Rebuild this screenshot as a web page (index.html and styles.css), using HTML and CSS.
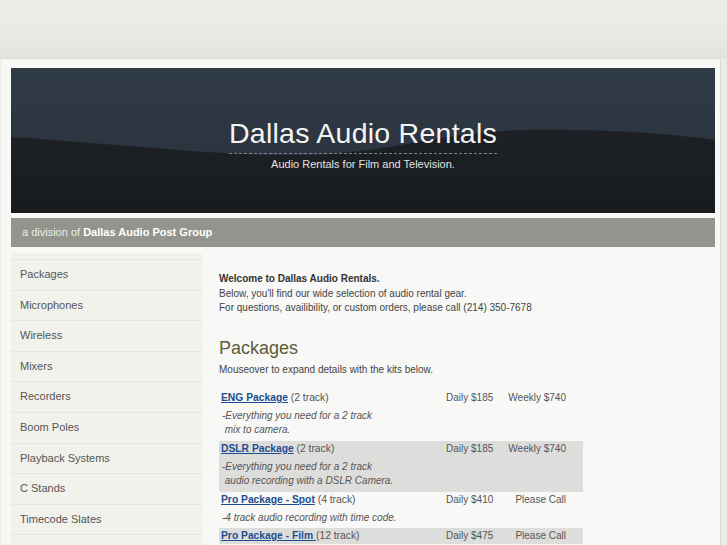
FILE: index.html
```html
<!DOCTYPE html>
<html>
<head>
<meta charset="utf-8">
<title>Dallas Audio Rentals</title>
<link rel="stylesheet" href="styles.css">
</head>
<body>
<div class="page">
  <header class="masthead">
    <h1 class="site-title">Dallas Audio Rentals</h1>
    <p class="tagline">Audio Rentals for Film and Television.</p>
  </header>
  <div class="division">a division of <strong>Dallas Audio Post Group</strong></div>
  <div class="main">
    <nav class="sidebar">
      <a href="#">Packages</a>
      <a href="#">Microphones</a>
      <a href="#">Wireless</a>
      <a href="#">Mixers</a>
      <a href="#">Recorders</a>
      <a href="#">Boom Poles</a>
      <a href="#">Playback Systems</a>
      <a href="#">C Stands</a>
      <a href="#">Timecode Slates</a>
    </nav>
    <section class="content">
      <p class="intro"><strong>Welcome to Dallas Audio Rentals.</strong><br>Below, you'll find our wide selection of audio rental gear.<br>For questions, availibility, or custom orders, please call (214) 350-7678</p>
      <h2 class="section-title">Packages</h2>
      <p class="hint">Mouseover to expand details with the kits below.</p>
      <table class="kits">
        <tbody>
          <tr class="name-row">
            <td class="name"><a href="#">ENG Package</a> (2 track)</td>
            <td class="daily">Daily $185</td>
            <td class="weekly">Weekly $740</td>
          </tr>
          <tr class="desc-row">
            <td colspan="3">-Everything you need for a 2 track<br>&nbsp;mix to camera.</td>
          </tr>
        </tbody>
        <tbody class="alt">
          <tr class="name-row">
            <td class="name"><a href="#">DSLR Package</a> (2 track)</td>
            <td class="daily">Daily $185</td>
            <td class="weekly">Weekly $740</td>
          </tr>
          <tr class="desc-row">
            <td colspan="3">-Everything you need for a 2 track<br>&nbsp;audio recording with a DSLR Camera.</td>
          </tr>
        </tbody>
        <tbody>
          <tr class="name-row">
            <td class="name"><a href="#">Pro Package - Spot</a> (4 track)</td>
            <td class="daily">Daily $410</td>
            <td class="weekly">Please Call</td>
          </tr>
          <tr class="desc-row">
            <td colspan="3">-4 track audio recording with time code.</td>
          </tr>
        </tbody>
        <tbody class="alt">
          <tr class="name-row">
            <td class="name"><a href="#">Pro Package - Film </a>(12 track)</td>
            <td class="daily">Daily $475</td>
            <td class="weekly">Please Call</td>
          </tr>
        </tbody>
      </table>
    </section>
  </div>
</div>
</body>
</html>
```

FILE: styles.css
```css
html, body {
  margin: 0;
  padding: 0;
}
body {
  background-color: #ebebe7;
  background-image:
    linear-gradient(180deg, #ededea 0px, #e9e9e5 35px, #e2e2dd 58px, #ebebe7 59px);
  background-size: 100% 100%;
  background-repeat: no-repeat;
  font-family: "Liberation Sans", Arial, sans-serif;
  font-size: 10px;
  color: #444;
  height: 545px;
  overflow: hidden;
}
.page {
  margin: 58px 0 0 1px;
  width: 720px;
  border-top: 1px solid #dcdcd8;
  border-right: 1px solid #d6d6d2;
  background: #f8f8f6;
  padding: 9px 5px 0 10px;
  box-sizing: border-box;
  min-height: 500px;
}
.masthead {
  height: 145px;
  background-color: #1b1f22;
  background-image:
    url("data:image/svg+xml,%3Csvg xmlns='http://www.w3.org/2000/svg' width='705' height='145' viewBox='0 0 705 145' preserveAspectRatio='none'%3E%3Cdefs%3E%3ClinearGradient id='t' x1='0' y1='0' x2='0' y2='1'%3E%3Cstop offset='0' stop-color='%23303b48'/%3E%3Cstop offset='1' stop-color='%23283039'/%3E%3C/linearGradient%3E%3ClinearGradient id='b' x1='0' y1='0' x2='0' y2='1'%3E%3Cstop offset='0' stop-color='%231d2125'/%3E%3Cstop offset='1' stop-color='%23181b1e'/%3E%3C/linearGradient%3E%3C/defs%3E%3Crect width='705' height='145' fill='url(%23t)'/%3E%3Cpath d='M0,69 C90,74 200,88 289,87 C380,86 430,63 515,62 C600,61 660,66 705,72 L705,145 L0,145 Z' fill='url(%23b)'/%3E%3C/svg%3E");
  background-size: 100% 100%;
  display: flex;
  flex-direction: column;
  align-items: center;
  padding-top: 48px;
  box-sizing: border-box;
}
.site-title {
  margin: 0;
  font-family: "Liberation Sans", Arial, sans-serif;
  font-weight: normal;
  font-size: 28.5px;
  line-height: 34px;
  color: #f4f4f4;
  padding-bottom: 3px;
  border-bottom: 1px dashed #7a8088;
  letter-spacing: 0.25px;
}
.tagline {
  margin: 3px 0 0;
  font-size: 11px;
  line-height: 14px;
  color: #e2e2e2;
}
.division {
  margin-top: 5px;
  height: 29px;
  line-height: 29px;
  background: #94948e;
  color: #ececea;
  padding-left: 11px;
  font-size: 11px;
}
.division strong {
  color: #ffffff;
}
.main {
  display: flex;
  margin-top: 6px;
  align-items: flex-start;
}
.sidebar {
  width: 191px;
  flex: none;
  background: #f2f2ec;
  padding-top: 6px;
  min-height: 300px;
}
.sidebar a {
  display: block;
  height: 29.6px;
  line-height: 29.6px;
  border-top: 1px solid #e6e6de;
  padding-left: 9px;
  color: #555;
  text-decoration: none;
  font-size: 11px;
}
.sidebar a:last-child {
  border-bottom: 1px solid #e6e6de;
}
.content {
  margin-left: 17px;
  width: 364px;
  padding-top: 19px;
}
.intro {
  margin: 0;
  line-height: 14.5px;
  color: #444;
}
.intro strong {
  color: #333;
}
.section-title {
  margin: 21px 0 0;
  font-weight: normal;
  font-size: 18px;
  line-height: 22px;
  color: #5c5c3c;
}
.hint {
  margin: 4px 0 0;
  line-height: 14px;
}
.kits {
  margin-top: 13px;
  width: 364px;
  border-collapse: collapse;
  table-layout: fixed;
}
.kits td {
  padding: 0;
  vertical-align: top;
}
.kits .alt td {
  background: #dddddc;
}
.name-row td {
  height: 16px;
  line-height: 16px;
}
.kits td.name {
  width: 225px;
  padding-left: 2px;
  color: #555;
  font-size: 10.3px;
}
.name a {
  color: #1d4e8f;
  font-weight: bold;
  text-decoration: underline;
}
.kits td.daily {
  width: 54px;
  color: #555;
}
.kits td.weekly {
  width: 66px;
  padding-right: 17px;
  text-align: right;
  color: #555;
}
.desc-row td {
  padding: 3px 0 3px 3px;
  line-height: 14.5px;
  font-style: italic;
  color: #555;
}
```
